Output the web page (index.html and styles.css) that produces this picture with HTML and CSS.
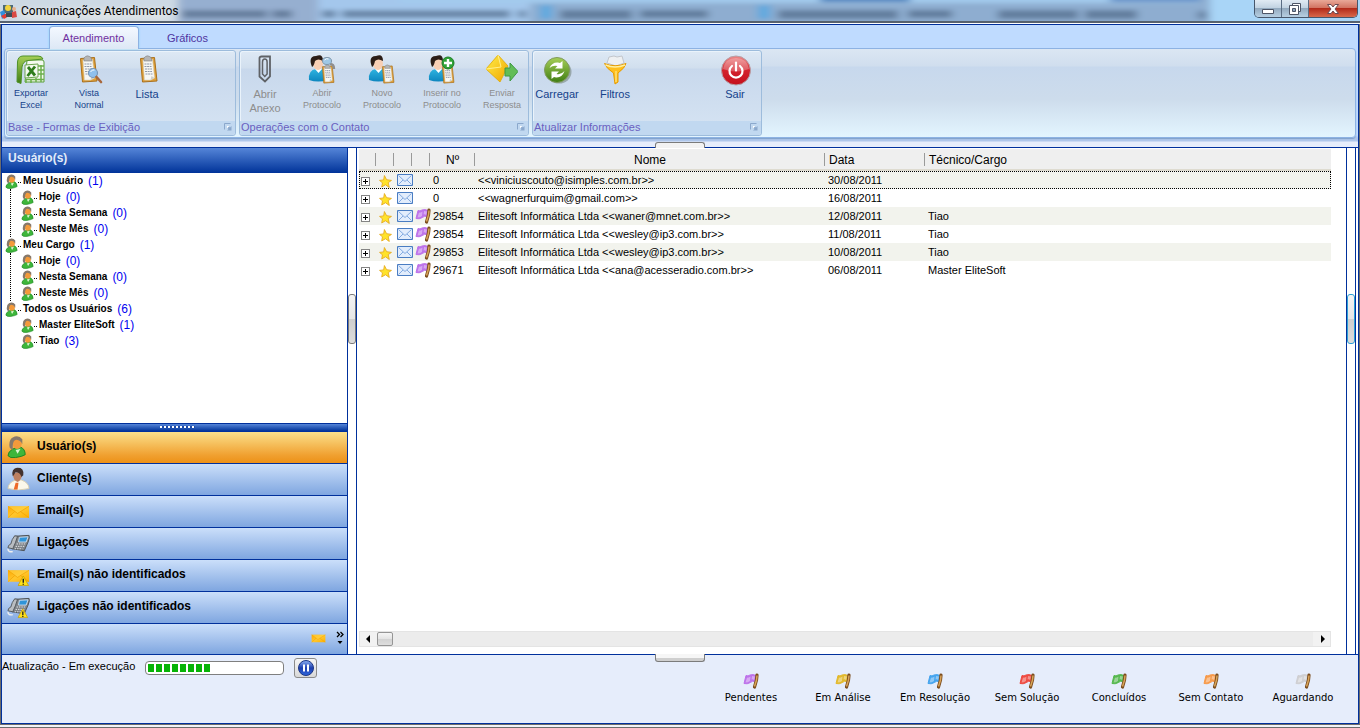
FILE: index.html
```html
<!DOCTYPE html>
<html lang="pt-BR">
<head>
<meta charset="utf-8">
<title>Comunicações Atendimentos</title>
<link rel="stylesheet" href="styles.css">
</head>
<body>
<svg class="defs" aria-hidden="true">
  <defs>
    <linearGradient id="gGreen" x1="0" y1="0" x2="0" y2="1"><stop offset="0" stop-color="#a6cf58"/><stop offset="1" stop-color="#3f7d12"/></linearGradient>
    <linearGradient id="gRed" x1="0" y1="0" x2="0" y2="1"><stop offset="0" stop-color="#ee8a8a"/><stop offset=".5" stop-color="#d3222c"/><stop offset="1" stop-color="#c40f1c"/></linearGradient>
    <linearGradient id="gGold" x1="0" y1="0" x2="1" y2="1"><stop offset="0" stop-color="#fff04a"/><stop offset="1" stop-color="#f0a400"/></linearGradient>
    <linearGradient id="gBlue" x1="0" y1="0" x2="0" y2="1"><stop offset="0" stop-color="#8fb2f5"/><stop offset=".5" stop-color="#1d3fae"/><stop offset="1" stop-color="#2f66dd"/></linearGradient>
    <linearGradient id="gShirt" x1="0" y1="0" x2="0" y2="1"><stop offset="0" stop-color="#2fb4e0"/><stop offset="1" stop-color="#0d86bf"/></linearGradient>
    <linearGradient id="gMail" x1="0" y1="0" x2="1" y2="1"><stop offset="0" stop-color="#ffa800"/><stop offset=".5" stop-color="#ffc62e"/><stop offset="1" stop-color="#ffb000"/></linearGradient>
    <filter id="soft"><feGaussianBlur stdDeviation="4 2"/></filter>
  </defs>
  <symbol id="clipboard" viewBox="0 0 20 28">
    <path d="M2 3.500 L16 2.500 L18.500 26 L4 27 Z" fill="#e0a23c" stroke="#a9701d"/>
    <path d="M4.500 5 L14 4.500 L16 23 L12 25 L6 25 Z" fill="#f7f7f4" stroke="#d5d5cc" stroke-width=".6"/>
    <path d="M5.500 3 q3-4 7-.5 l1 3.500 h-8 z" fill="#b5b5b5" stroke="#808080" stroke-width=".6"/>
    <path d="M6 9 h7 M6 11.500 h7 M6.500 14 h7 M6.500 16.500 h7 M7 19 h7" stroke="#8f99aa" stroke-width="1.200" stroke-dasharray="2 .6"/>
    <path d="M12 25 l1-4 3 2z" fill="#cfcfc8"/>
  </symbol>
  <symbol id="excel" viewBox="0 0 32 32">
    <path d="M12 6 h15 q2 0 2 2 v20 h-19 z" fill="#f4faf0" stroke="#5a9f3a"/>
    <path d="M8 2 Q3 2 2.500 8 L2 28 L6 29.500 L7 13 Q8 7 13 6.500 L28 5 Q27 2 23 2 Z" fill="url(#gGreen)" stroke="#4e9128"/>
    <path d="M11 29 V25 M16 29 v-4 M21 28 v-4 M26 28 V11 M23 12 h6 M23 16 h6 M23 20 h6 M11 25.500 h18" stroke="#6bb04a" stroke-width="1.500"/>
    <path d="M10 11 L23 10 V23 L10 24 Z" fill="#f3faef" stroke="#6da550"/>
    <path d="M13 13 L20 21.500 M20 12.500 L12.500 22" stroke="#2f7d1c" stroke-width="2.800"/>
  </symbol>
  <symbol id="view" viewBox="0 0 32 32">
    <use href="#clipboard" x="5" y="1" width="21" height="28"/>
    <circle cx="20" cy="19" r="4.500" fill="#8fc0ee" stroke="#7797bb" stroke-width="1.200"/>
    <path d="M17.500 18 q2-3 4-2" stroke="#fff" fill="none"/>
    <path d="M23.500 23 l4.500 5" stroke="#a8683d" stroke-width="2.600" stroke-linecap="round"/>
  </symbol>
  <symbol id="list" viewBox="0 0 32 32"><use href="#clipboard" x="7" y="1" width="21" height="28"/></symbol>
  <symbol id="clip" viewBox="0 0 32 32">
    <path d="M10.500 4 q0-1.500 2-1.500 h8.500 v20 l-5 5 l-5.500 -5 z" fill="none" stroke="#5f6266" stroke-width="1.800"/>
    <path d="M13.500 8 V20 l2.300 2.500 l2.300-2.500 V8 q0-3-2.300-3 t-2.300 3" fill="none" stroke="#5f6266" stroke-width="1.500"/>
  </symbol>
  <symbol id="person" viewBox="0 0 32 32">
    <path d="M3 26 Q2 16 10 15 L17 15 Q22 17 22 26 Q12 29 3 26Z" fill="url(#gShirt)"/>
    <path d="M9 15 l3.500 4 3.500-4z" fill="#fff"/>
    <ellipse cx="12" cy="9.500" rx="5" ry="6.500" fill="#f8cfb4"/>
    <path d="M5 10 Q3 2 10 2 Q17 -1 17 7 Q12 4 9 7 Q8 12 6 13 Z" fill="#2b1d17"/>
    <use href="#clipboard" x="15" y="10" width="14" height="20"/>
  </symbol>
  <symbol id="person-open" viewBox="0 0 32 32"><use href="#person"/><path d="M24 10 q4 0 4 5" fill="none" stroke="#8f8f8f" stroke-width="2.400"/><ellipse cx="21" cy="7" rx="4.500" ry="3.500" fill="#9fc8e6" stroke="#7f96aa"/><path d="M18.500 6 q2-2 4-1" stroke="#fff" fill="none"/></symbol>
  <symbol id="person-add" viewBox="0 0 32 32"><use href="#person"/><circle cx="22" cy="9" r="6" fill="#2fa336" stroke="#1c7d26"/><path d="M22 5 v8 M18 9 h8" stroke="#fff" stroke-width="2.400"/></symbol>
  <symbol id="send" viewBox="0 0 32 32">
    <path d="M0 15 L12 1 L22 12 L14 28 Z" fill="url(#gGold)" stroke="#e0a800" stroke-width=".8"/>
    <path d="M0 15 L15 13 L12 1" fill="none" stroke="#fff08a" stroke-width="1"/>
    <path d="M19 14 h5 v-5 l8 8.500 l-8 9.500 v-5 h-5 z" fill="#62bd57" stroke="#3e9a43" stroke-width="1"/>
  </symbol>
  <symbol id="refresh" viewBox="0 0 32 32">
    <ellipse cx="18" cy="18" rx="12.500" ry="11.500" fill="#68786a" opacity=".5"/>
    <circle cx="16" cy="16" r="12.500" fill="url(#gGreen)" stroke="#7f9a5c"/>
    <path d="M8.500 14 Q11 8 17 8.500 L19 9 L21.500 7 V14.500 H14 L16.500 12 Q12 11 8.500 14Z M23.500 17 Q21 24 15 23.500 L13 23 L10.500 25 V17.500 H18 L15.500 20 Q20 21 23.500 17Z" fill="#fff"/>
  </symbol>
  <symbol id="funnel" viewBox="0 0 32 32">
    <path d="M8 9 l2-6 5-1 3 1 5-1 2 7-8 3z" fill="#eef0f2" stroke="#c2c6cc"/>
    <path d="M5.500 9.500 Q16 14 27 9.500 Q26 14 19 19 V28 L16 30 L14.500 19 Q7 14 5.500 9.500Z" fill="#ffbf1d" stroke="#e79b00"/>
    <path d="M6.500 11 Q16 15 26 11" fill="none" stroke="#fff0a0" stroke-width="1.500"/>
    <path d="M17 17 v11" stroke="#fff09a"/>
  </symbol>
  <symbol id="power" viewBox="0 0 32 32">
    <circle cx="17" cy="16.500" r="14.500" fill="url(#gRed)" stroke="#b6a0a6"/>
    <path d="M4 15 Q6 4 17 4 Q28 4 30 15 Q17 20 4 15Z" fill="#fff" opacity=".25"/>
    <path d="M13 12 a6.500 6.500 0 1 0 8 0" fill="none" stroke="#fff" stroke-width="2.200" stroke-linecap="round"/>
    <path d="M17 8.500 v8" stroke="#fff" stroke-width="2.200" stroke-linecap="round"/>
  </symbol>
  <symbol id="user" viewBox="0 0 20 24">
    <path d="M1 21 Q1 17 6 14 L14 12 Q19 14 19 20 Q16 22 9 23 Q3 24 1 21Z" fill="#3eb63b" stroke="#1c8622"/>
    <path d="M9 15 l2 4 3-5z" fill="#dff5d3"/>
    <ellipse cx="10.500" cy="8" rx="5" ry="6" fill="#f39a3b"/>
    <path d="M2.500 11 Q2 4 6 2 Q12 -1 16 4 L16 9 Q14 5 10 4.500 Q6 5 6 11 L6 15 L3 13Z" fill="#87796b"/>
  </symbol>
  <symbol id="client" viewBox="0 0 24 24">
    <path d="M1 22 Q1 16 9 13 H15 Q23 16 23 22 Q12 25 1 22Z" fill="#fbf8ea" stroke="#d8cfb2"/>
    <path d="M9 16 h3 l-1 7 h-4z" fill="#ee6a28"/>
    <path d="M6 7 Q7 14 11 15 Q16 13 16 5 Q12 3 6 7Z" fill="#bd8062"/>
    <path d="M6 9 Q4 1 11 0 Q18 0 17 8 L15 10 Q14 5 9 5 L7 8Z" fill="#433230"/>
  </symbol>
  <symbol id="envelope" viewBox="0 0 24 14">
    <path d="M1 1 H23 V13 H1Z" fill="url(#gMail)"/><path d="M1 1 H23 L11 8.500Z" fill="#ffd447" opacity=".6"/>
    <path d="M1 1 L11 8.500 L23 1 M1 13 L8 6.500 M23 13 L14 6.500" fill="none" stroke="#f0a000" stroke-width=".7"/>
  </symbol>
  <symbol id="phone" viewBox="0 0 24 20">
    <path d="M8 2 L23 1 Q24 3 22 8 L18 17 L5 15Z" fill="#7e8388" stroke="#4b5054"/>
    <path d="M13 3 L22 2.500 L20 8 L12 8Z" fill="#2f94d8" stroke="#cde"/>
    <path d="M8 1.500 L11 2 Q9 9 6 15 L1 14 Q1 11 4 10 Q5 5 8 1.500Z" fill="#b9bdc1" stroke="#54595d"/>
    <path d="M10 10 h9 M9 12.500 h9 M8 15 h8" stroke="#e7e9ea" stroke-dasharray="1.500 1"/>
    <path d="M1 15 Q1 19 6 18" fill="none" stroke="#eee" stroke-width="1.500"/>
  </symbol>
  <symbol id="warn" viewBox="0 0 12 12"><path d="M6 1 L11.500 11 H.5Z" fill="#ffe119" stroke="#c9a000" stroke-width=".8"/><path d="M6 4 v4 M6 9 v1.300" stroke="#222" stroke-width="1.500"/></symbol>
  <symbol id="star" viewBox="0 0 12 12"><path d="M5 .5 L7 4.300 L11.500 5 L8.500 7 L9.500 11.500 L6 9 L2.500 11 L3.200 7.200 L.5 5 L4.300 4.500Z" fill="#ffe32a" stroke="#e5a91c" stroke-width=".8"/></symbol>
  <symbol id="mail" viewBox="0 0 16 12"><path d="M.5 .5 h15 v11 h-15z" fill="#e2edfc" stroke="#4a7dc2"/><path d="M1.500 1.500 L8 7.500 L14.500 1.500 M1.500 10.500 L6 6 M14.500 10.500 L10 6" fill="none" stroke="#82aae0"/></symbol>
  <symbol id="flag" viewBox="0 0 16 16">
    <path d="M3 2.500 Q5 3.500 7 2 Q10 1 13 2.500 L11.500 8.500 Q9.500 7.500 7.500 9.500 Q4 11.500 1 10.500Z" fill="currentColor" stroke="currentColor"/>
    <path d="M4 4.500 Q6 5 7.500 3.500 L7 8 Q5 9.500 2.500 9.500Z M9 3 L12 3.500 L11 7 Q10 6 8.500 6.500Z" fill="#fff" opacity=".4"/>
    <path d="M14 2 L13.500 7 L11.500 14" fill="none" stroke="#7b4c1c" stroke-width="3.200" stroke-linecap="round"/><path d="M14 2.500 L13.500 7 L11.500 13.500" fill="none" stroke="#d9a458" stroke-width="1.500"/>
  </symbol>
  <symbol id="launcher" viewBox="0 0 8 8"><path d="M.5 6.500 V.5 H6.500" fill="none" stroke="#8ba8cc"/><path d="M3 3 h2 v2 h-2z" fill="#fff"/><path d="M7.500 3 V7.500 H3 L4.500 6 L3.500 5 L5 3.500 L6 4.500Z" fill="#8ba8cc"/></symbol>
</svg>

<div class="window">
  <header class="titlebar">
    <svg class="glass" viewBox="0 0 1360 21" preserveAspectRatio="none" aria-hidden="true">
      <g filter="url(#soft)">
        <rect x="-10" y="-5" width="200" height="32" fill="#cdd9e4"/>
        <rect x="20" y="8" width="150" height="12" fill="#dce2e6"/>
        <rect x="178" y="-5" width="140" height="32" fill="#96afd0"/>
        <rect x="318" y="-5" width="212" height="32" fill="#a4c7ec"/>
        <rect x="530" y="-5" width="690" height="32" fill="#8eadd0"/>
        <rect x="400" y="-5" width="800" height="8" fill="#a3cbed"/>
        <rect x="1210" y="-5" width="160" height="32" fill="#a9d5f7"/>
        <g fill="#48617f" opacity=".6">
          <rect x="182" y="10" width="85" height="8"/><rect x="272" y="10" width="20" height="8"/>
          <rect x="322" y="10" width="14" height="8"/><rect x="342" y="10" width="168" height="8"/><rect x="518" y="10" width="8" height="8"/>
          <rect x="560" y="10" width="72" height="9"/><rect x="640" y="10" width="68" height="8"/>
          <rect x="778" y="10" width="120" height="9"/><rect x="908" y="10" width="44" height="8"/>
          <rect x="998" y="10" width="80" height="9"/><rect x="1085" y="10" width="52" height="9"/><rect x="1198" y="11" width="8" height="8"/>
        </g>
        <rect x="540" y="5" width="12" height="14" fill="#5fa9df"/><rect x="758" y="5" width="12" height="14" fill="#5fa9df"/>
        <rect x="820" y="-4" width="90" height="6" fill="#4b82bd"/><rect x="1110" y="-4" width="90" height="6" fill="#6591c8"/>
      </g>
    </svg>
    <svg class="app-icon" viewBox="0 0 18 18" aria-hidden="true"><path d="M3 3 h10 v8 h-10z" fill="#4b6a78"/><circle cx="8" cy="6" r="3" fill="#f2d33c"/><path d="M0 10 l4-2 2 6-4 3z" fill="#2f8fe0"/><path d="M1 14 l6-3 2 3-5 3z" fill="#e23c36"/><path d="M12 10 l4-1 1 6-5 1z" fill="#d94a45"/><circle cx="14" cy="7" r="2" fill="#e9b08c"/><path d="M6 11 h6 v4 h-6z" fill="#3d4d58"/></svg>
    <h1 class="title">Comunicações Atendimentos</h1>
    <div class="win-buttons">
      <button class="win-btn" aria-label="Minimizar"><svg viewBox="0 0 14 12"><path d="M1.500 6.500 h11 v4 h-11z" fill="#fff" stroke="#4d5566"/></svg></button>
      <button class="win-btn" aria-label="Restaurar"><svg viewBox="0 0 14 12"><path d="M4.500 .5 h8 v8 h-8z" fill="#fff" stroke="#4d5566"/><path d="M1.500 2.500 h9 v9 h-9z" fill="#fff" stroke="#4d5566"/><path d="M4.500 5.500 h3 v3 h-3z" fill="#8ea6bf" stroke="#4d5566"/></svg></button>
      <button class="win-btn win-close" aria-label="Fechar"><svg viewBox="0 0 14 12"><path d="M1.500 1.500 h3.500 l2 2.500 2-2.500 h3.500 l-3.500 4.500 3.500 4.500 h-3.500 l-2-2.500-2 2.500 h-3.500 l3.500-4.500z" fill="#fff" stroke="#6b4a52"/></svg></button>
    </div>
  </header>

  <div class="frame">
    <section class="ribbon">
      <nav class="tabs" role="tablist">
        <button class="tab active" role="tab" aria-selected="true">Atendimento</button>
        <button class="tab" role="tab" aria-selected="false">Gráficos</button>
      </nav>
      <div class="ribbon-panel">
        <section class="group group-base">
          <div class="tools wide-gap">
            <button class="tool"><svg><use href="#excel"/></svg><span>Exportar<br>Excel</span></button>
            <button class="tool"><svg><use href="#view"/></svg><span>Vista<br>Normal</span></button>
            <button class="tool large"><svg><use href="#list"/></svg><span>Lista</span></button>
          </div>
          <h2 class="caption">Base - Formas de Exibição<svg><use href="#launcher"/></svg></h2>
        </section>
        <section class="group group-contact">
          <div class="tools">
            <button class="tool large" disabled><svg><use href="#clip"/></svg><span>Abrir<br>Anexo</span></button>
            <button class="tool broad" disabled><svg><use href="#person-open"/></svg><span>Abrir<br>Protocolo</span></button>
            <button class="tool broad" disabled><svg><use href="#person"/></svg><span>Novo<br>Protocolo</span></button>
            <button class="tool broad" disabled><svg><use href="#person-add"/></svg><span>Inserir no<br>Protocolo</span></button>
            <button class="tool broad" disabled><svg><use href="#send"/></svg><span>Enviar<br>Resposta</span></button>
          </div>
          <h2 class="caption">Operações com o Contato<svg><use href="#launcher"/></svg></h2>
        </section>
        <section class="group group-update">
          <div class="tools wide-gap">
            <button class="tool large"><svg><use href="#refresh"/></svg><span>Carregar</span></button>
            <button class="tool large"><svg><use href="#funnel"/></svg><span>Filtros</span></button>
            <button class="tool large last"><svg><use href="#power"/></svg><span>Sair</span></button>
          </div>
          <h2 class="caption">Atualizar Informações<svg><use href="#launcher"/></svg></h2>
        </section>
      </div>
      <button class="grip grip-top" aria-label="Recolher faixa"></button>
    </section>

    <main class="main">
      <aside class="sidebar">
        <h2 class="side-title">Usuário(s)</h2>
        <ul class="tree">
          <li><div class="node"><svg><use href="#user"/></svg><b>Meu Usuário</b><span>(1)</span></div>
            <ul>
              <li class="node"><svg><use href="#user"/></svg><b>Hoje</b><span>(0)</span></li>
              <li class="node"><svg><use href="#user"/></svg><b>Nesta Semana</b><span>(0)</span></li>
              <li class="node"><svg><use href="#user"/></svg><b>Neste Mês</b><span>(0)</span></li>
            </ul>
          </li>
          <li><div class="node"><svg><use href="#user"/></svg><b>Meu Cargo</b><span>(1)</span></div>
            <ul>
              <li class="node"><svg><use href="#user"/></svg><b>Hoje</b><span>(0)</span></li>
              <li class="node"><svg><use href="#user"/></svg><b>Nesta Semana</b><span>(0)</span></li>
              <li class="node"><svg><use href="#user"/></svg><b>Neste Mês</b><span>(0)</span></li>
            </ul>
          </li>
          <li><div class="node"><svg><use href="#user"/></svg><b>Todos os Usuários</b><span>(6)</span></div>
            <ul>
              <li class="node"><svg><use href="#user"/></svg><b>Master EliteSoft</b><span>(1)</span></li>
              <li class="node"><svg><use href="#user"/></svg><b>Tiao</b><span>(3)</span></li>
            </ul>
          </li>
        </ul>
        <div class="nav-grip"><i></i></div>
        <nav class="side-nav">
          <button class="nav-item selected"><svg viewBox="0 0 24 24"><use href="#user" width="20" height="24"/></svg>Usuário(s)</button>
          <button class="nav-item"><svg viewBox="0 0 24 24"><use href="#client"/></svg>Cliente(s)</button>
          <button class="nav-item"><svg viewBox="0 0 24 24"><use href="#envelope" y="6" width="24" height="14"/></svg>Email(s)</button>
          <button class="nav-item"><svg viewBox="0 0 24 24"><use href="#phone" y="3" width="24" height="20"/></svg>Ligações</button>
          <button class="nav-item"><svg viewBox="0 0 24 24"><use href="#envelope" y="6" width="24" height="14"/><use href="#warn" x="11" y="12" width="12" height="12"/></svg>Email(s) não identificados</button>
          <button class="nav-item"><svg viewBox="0 0 24 24"><use href="#phone" y="2" width="24" height="20"/><use href="#warn" x="11" y="13" width="11" height="11"/></svg>Ligações não identificados</button>
        </nav>
        <div class="nav-more">
          <button aria-label="Email(s)"><svg class="mini-mail"><use href="#envelope"/></svg></button>
          <button aria-label="Mais opções"><svg class="more" viewBox="0 0 8 14"><path d="M1 1 l2.500 2.500 L1 6 M4.500 1 L7 3.500 L4.500 6" fill="none" stroke="#000" stroke-width="1.300"/><path d="M1.500 10 h5 l-2.500 3z"/></svg></button>
        </div>
      </aside>

      <div class="gutter"><button class="grip grip-side" aria-label="Recolher painel"></button></div>

      <section class="content">
        <table class="grid">
          <colgroup><col class="c-exp"><col class="c-icon"><col class="c-icon"><col class="c-icon"><col class="c-num"><col class="c-name"><col class="c-date"><col></colgroup>
          <thead>
            <tr><th></th><th></th><th></th><th></th><th class="mid">Nº</th><th class="mid">Nome</th><th>Data</th><th>Técnico/Cargo</th></tr>
          </thead>
          <tbody>
            <tr class="focused"><td><button class="expand" aria-label="Expandir"></button></td><td><svg class="star"><use href="#star"/></svg></td><td><svg class="mail"><use href="#mail"/></svg></td><td></td><td>0</td><td>&lt;&lt;viniciuscouto@isimples.com.br&gt;&gt;</td><td>30/08/2011</td><td></td></tr>
            <tr><td><button class="expand" aria-label="Expandir"></button></td><td><svg class="star"><use href="#star"/></svg></td><td><svg class="mail"><use href="#mail"/></svg></td><td></td><td>0</td><td>&lt;&lt;wagnerfurquim@gmail.com&gt;&gt;</td><td>16/08/2011</td><td></td></tr>
            <tr><td><button class="expand" aria-label="Expandir"></button></td><td><svg class="star"><use href="#star"/></svg></td><td><svg class="mail"><use href="#mail"/></svg></td><td><svg class="flag purple"><use href="#flag"/></svg></td><td>29854</td><td>Elitesoft Informática Ltda &lt;&lt;waner@mnet.com.br&gt;&gt;</td><td>12/08/2011</td><td>Tiao</td></tr>
            <tr><td><button class="expand" aria-label="Expandir"></button></td><td><svg class="star"><use href="#star"/></svg></td><td><svg class="mail"><use href="#mail"/></svg></td><td><svg class="flag purple"><use href="#flag"/></svg></td><td>29854</td><td>Elitesoft Informática Ltda &lt;&lt;wesley@ip3.com.br&gt;&gt;</td><td>11/08/2011</td><td>Tiao</td></tr>
            <tr><td><button class="expand" aria-label="Expandir"></button></td><td><svg class="star"><use href="#star"/></svg></td><td><svg class="mail"><use href="#mail"/></svg></td><td><svg class="flag purple"><use href="#flag"/></svg></td><td>29853</td><td>Elitesoft Informática Ltda &lt;&lt;wesley@ip3.com.br&gt;&gt;</td><td>10/08/2011</td><td>Tiao</td></tr>
            <tr><td><button class="expand" aria-label="Expandir"></button></td><td><svg class="star"><use href="#star"/></svg></td><td><svg class="mail"><use href="#mail"/></svg></td><td><svg class="flag purple"><use href="#flag"/></svg></td><td>29671</td><td>Elitesoft Informática Ltda &lt;&lt;ana@acesseradio.com.br&gt;&gt;</td><td>06/08/2011</td><td>Master EliteSoft</td></tr>
          </tbody>
        </table>
        <div class="hscroll">
          <button class="arrow" aria-label="Rolar para a esquerda"><svg viewBox="0 0 6 8"><path d="M4 0 v8 l-4-4z"/></svg></button>
          <span class="thumb"></span>
          <button class="arrow" aria-label="Rolar para a direita"><svg viewBox="0 0 6 8"><path d="M2 0 v8 l4-4z"/></svg></button>
        </div>
      </section>
      <div class="gutter gutter-right"><button class="grip grip-side hot" aria-label="Recolher detalhes"></button></div>
    </main>

    <footer class="status">
      <button class="grip grip-bottom" aria-label="Recolher rodapé"></button>
      <div class="progress-area">
        <label for="update">Atualização - Em execução</label>
        <progress id="update" value="47" max="100"></progress>
        <button class="pause" aria-label="Pausar"><svg viewBox="0 0 16 16"><circle cx="8" cy="8" r="7.500" fill="url(#gBlue)" stroke="#1c3585"/><path d="M6 4.500 v7 M10 4.500 v7" stroke="#fff" stroke-width="2"/></svg></button>
      </div>
      <ul class="legend">
        <li><svg class="flag purple"><use href="#flag"/></svg>Pendentes</li>
        <li><svg class="flag yellow"><use href="#flag"/></svg>Em Análise</li>
        <li><svg class="flag blue"><use href="#flag"/></svg>Em Resolução</li>
        <li><svg class="flag red"><use href="#flag"/></svg>Sem Solução</li>
        <li><svg class="flag green"><use href="#flag"/></svg>Concluídos</li>
        <li><svg class="flag orange"><use href="#flag"/></svg>Sem Contato</li>
        <li><svg class="flag gray"><use href="#flag"/></svg>Aguardando</li>
      </ul>
    </footer>
  </div>
</div>
</body>
</html>
```
FILE: styles.css
```css
* { box-sizing: border-box; }
html, body { height: 100%; }
body { margin: 0; font: 11px/14px "Liberation Sans", Arial, sans-serif; color: #000; background: #fff; }
button { font: inherit; color: inherit; margin: 0; padding: 0; border: 0; background: none; }
h1, h2, ul { margin: 0; padding: 0; font: inherit; list-style: none; }
svg { display: block; flex: none; }
.defs { position: absolute; width: 0; height: 0; }

.window { display: flex; flex-direction: column; min-height: 100vh; padding-bottom: 3px; border-bottom: 1px solid #6c6c6c; background: #f3f3f6; }

/* Title bar */
.titlebar { position: relative; display: flex; align-items: flex-start; height: 24px; border-bottom: 1px solid #fff; box-shadow: inset 0 -2px #56616e; overflow: hidden; }
.glass { position: absolute; inset: 0 0 2px; width: 100%; height: 21px; }
.app-icon { position: relative; width: 18px; height: 18px; margin-top: 2px; }
.title { position: relative; flex: 1; padding: 2px 0 0 3px; font: 12px/18px Roboto, "Noto Sans", sans-serif; }
.win-buttons { position: relative; display: flex; margin-right: 2px; border: 1px solid #46566b; border-top: 0; border-radius: 0 0 5px 5px; overflow: hidden; }
.win-btn { display: flex; align-items: center; justify-content: center; width: 27px; height: 17px; border-right: 1px solid #5a6d84; background: linear-gradient(#e1ebf4, #c2d3e2 45%, #93aabf 50%, #b7cfe2); }
.win-btn svg { width: 14px; height: 12px; }
.win-close { width: 48px; border-right: 0; background: linear-gradient(#e9a898, #d27462 45%, #b32b1a 50%, #d8694b); }

.frame { flex: 1; display: flex; flex-direction: column; margin: 0 1px; border: 1px solid #00309c; outline: 1px solid #6c6c6c; background: #e6edfb; }

/* Ribbon */
.ribbon { position: relative; padding-bottom: 6px; border-bottom: 1px solid #00309c; background: linear-gradient(#bfdbff 110px, #aec6ea 113px, #aec6ea 116px, #e6edfb 117px); }
.tabs { display: flex; gap: 4px; height: 23px; padding: 1px 0 0 47px; color: #4e33a0; }
.tab { width: 90px; height: 23px; padding-right: 1px; }
.tab.active { position: relative; color: #7030a0; border: 1px solid #8db2e3; border-bottom: 0; border-radius: 4px 4px 0 0; background: linear-gradient(#f3f8ff, #dde8f5); box-shadow: 0 0 2px #7fd8f8; }
.ribbon-panel { display: flex; gap: 3px; margin: 0 2px 3px; padding: 1px; border: 1px solid #8db2e3; border-radius: 4px; background: linear-gradient(#dbe6f3, #d0deee 17px, #c7d8ed 18px, #cddcec 50px, #e3f5ff); box-shadow: 0 1px 1px #7fa0cb; }
.group { display: flex; flex-direction: column; border: 1px solid #9dbcdc; border-radius: 3px; background: linear-gradient(#dee9f5, #d1dfee 17px, #c8d8ec 18px, #d6e4f3); box-shadow: inset 1px 1px #eaf3fb; }
.group-base, .group-update { width: 230px; }
.group-contact { width: 290px; }
.tools { display: flex; gap: 4px; height: 70px; padding-top: 3px; }
.tools.wide-gap { gap: 10px; }
.tool { flex: none; display: flex; flex-direction: column; align-items: center; width: 48px; color: #15428b; font-size: 9px; line-height: 12px; }
.tool svg { width: 32px; height: 32px; margin-bottom: 1px; }
.tool.broad { width: 56px; }
.tool.large { width: 50px; font-size: 11px; line-height: 14px; }
.wide-gap .large { width: 48px; }
.tool.last { margin: 0 2px 0 auto; }
.tool:disabled { color: #8d8d8d; }
.caption { display: flex; align-items: center; justify-content: space-between; height: 14px; line-height: 12px; padding: 0 3px 2px 1px; border-radius: 0 0 3px 3px; background: #c1d8f0; color: #6a5fc0; }
.caption svg { width: 8px; height: 8px; }

/* Collapse handles that sit on the dividing lines */
.grip { border: 1px solid #7b7b7b; background: linear-gradient(#f4f4f4, #e6e6e6 50%, #cfcfcf 51%, #dcdcdc); }
.grip-top { position: absolute; left: 50%; bottom: -1px; width: 50px; height: 6px; margin-left: -25px; border-bottom: 0; border-radius: 3px 3px 0 0; background: #f2f2f2; }
.grip-bottom { position: absolute; left: 50%; top: -1px; width: 50px; height: 8px; margin-left: -25px; border-top: 0; border-radius: 0 0 3px 3px; background: linear-gradient(#f6f6f6 50%, #cfcfcf 51%); }
.grip-side { width: 8px; height: 50px; border-radius: 3px; }
.grip-side.hot { border-color: #2b9fd6; }

/* Main area */
.main { flex: 1; display: flex; background: #fff; }
.sidebar { flex: none; display: flex; flex-direction: column; width: 346px; border-right: 1px solid #00309c; }
.side-title { height: 25px; padding: 2px 6px 0; font-size: 12px; line-height: 16px; font-weight: bold; color: #e3ecfa; background: linear-gradient(#5585d8, #003399); }
.tree { flex: 1; padding-left: 3px; }
.tree > li { position: relative; }
.tree > li:not(:last-child)::before { content: ""; position: absolute; left: 5px; top: 16px; bottom: 0; border-left: 1px dotted #000; }
.tree ul { padding-left: 16px; }
.node { display: flex; align-items: center; height: 16px; font-size: 10px; }
.node svg { width: 13px; height: 15px; }
.node b { position: relative; margin-left: 5px; }
.node b::before { content: ""; position: absolute; left: -5px; top: 8px; width: 3px; border-top: 1px dotted #000; }
.node span { margin-left: 5px; font-size: 12px; color: #0000f0; }
.nav-grip { display: flex; justify-content: center; height: 9px; padding: 2px 0 0 6px; border: solid #00309c; border-width: 1px 0; background: linear-gradient(#5585d8, #003399); }
.nav-grip i { width: 35px; height: 2px; background: repeating-linear-gradient(90deg, #fff 0 2px, #1d4aa8 2px 4px); }
.nav-item { display: flex; align-items: center; gap: 7px; width: 100%; height: 32px; padding: 0 5px 3px; border-bottom: 1px solid #00309c; font-size: 12px; font-weight: bold; background: linear-gradient(#cbdffa, #7fa6e0); }
.nav-item svg { width: 23px; height: 24px; margin-top: 2px; }
.nav-item.selected { background: linear-gradient(#fbe08b, #f0a030 75%, #ed9117); }
.nav-more { display: flex; justify-content: flex-end; align-items: center; gap: 10px; height: 30px; padding: 0 3px 2px; background: linear-gradient(#cbdffa, #7fa6e0); }
.mini-mail { width: 15px; height: 9px; }
.more { width: 8px; height: 14px; }
.gutter { flex: none; display: flex; align-items: center; width: 8px; padding-bottom: 164px; }
.gutter-right { width: 9px; margin-right: 2px; border-right: 1px solid #00309c; }

/* Grid */
.content { flex: 1; min-width: 0; display: flex; flex-direction: column; justify-content: space-between; padding: 1px 15px 7px 2px; border: solid #00309c; border-width: 0 1px; }
.grid { width: 100%; table-layout: fixed; border-collapse: separate; border-spacing: 0; }
.c-exp { width: 17px; }
.c-icon { width: 18px; }
.c-num { width: 45px; }
.c-name { width: 350px; }
.c-date { width: 100px; }
.grid th { height: 22px; padding: 2px 4px 0; border-bottom: 2px solid #dedbd0; font-size: 12px; font-weight: normal; text-align: left; background: linear-gradient(#9a9a9a, #9a9a9a) right 50% / 1px 13px no-repeat #efefef; }
.grid th:last-child { background: #efefef; }
.grid th.mid { text-align: center; }
.grid td { height: 18px; padding: 0 3px; white-space: nowrap; line-height: 16px; }
.grid td:nth-child(-n+4) { padding: 0; }
.grid .star { margin: 2px auto 0; }
.grid .mail, .grid .flag { margin-left: 3px; }
.grid tbody tr:nth-child(odd) { background: #f2f3ed; }
.focused { outline: 1px dotted #000; outline-offset: -1px; }
.expand { display: block; width: 9px; height: 9px; margin: 2px 0 0 2px; border: 1px solid #848484; background: linear-gradient(#000, #000) 50% / 5px 1px no-repeat, linear-gradient(#000, #000) 50% / 1px 5px no-repeat, #fff; }
.star { width: 13px; height: 13px; }
.mail { width: 16px; height: 12px; }
.flag { width: 16px; height: 16px; }
.purple { color: #bd72ea; }
.yellow { color: #e2b92c; }
.blue { color: #45a4ee; }
.red { color: #ee4a41; }
.green { color: #55b84e; }
.orange { color: #f79a4a; }
.gray { color: #cfcfd2; }
.hscroll { display: flex; align-items: center; height: 16px; border: 1px solid #e4e4e4; background: #ececec; }
.arrow { display: flex; justify-content: center; align-items: center; width: 17px; height: 14px; background: #f2f2f2; }
.arrow svg { width: 6px; height: 8px; }
.thumb { width: 16px; height: 14px; margin-right: auto; border: 1px solid #959595; border-radius: 2px; background: linear-gradient(#f5f5f5, #e3e3e3 50%, #d2d2d2 51%, #dedede); }

/* Status bar */
.status { position: relative; display: flex; justify-content: space-between; align-items: flex-start; height: 69px; border-top: 1px solid #00309c; }
.progress-area { display: flex; align-items: center; gap: 10px; padding-top: 3px; }
.progress-area label { margin-bottom: 4px; }
progress { appearance: none; width: 139px; height: 14px; padding: 2px; border: 1px solid #7f7f7f; border-radius: 4px; background: #fff; }
progress::-webkit-progress-bar { background: none; }
progress::-webkit-progress-value { background: repeating-linear-gradient(90deg, #06b306 0 6px, #fff 6px 8px); }
.pause { display: flex; align-items: center; justify-content: center; width: 23px; height: 20px; border: 1px solid #8a8a8a; border-radius: 3px; background: linear-gradient(#f5f5f5, #d8d8d8); }
.pause svg { width: 16px; height: 16px; }
.legend { display: flex; padding: 18px 9px 0 0; font: 10px/14px "DejaVu Sans", Verdana, sans-serif; }
.legend li { display: flex; flex-direction: column; align-items: center; gap: 2px; width: 92px; }
```
